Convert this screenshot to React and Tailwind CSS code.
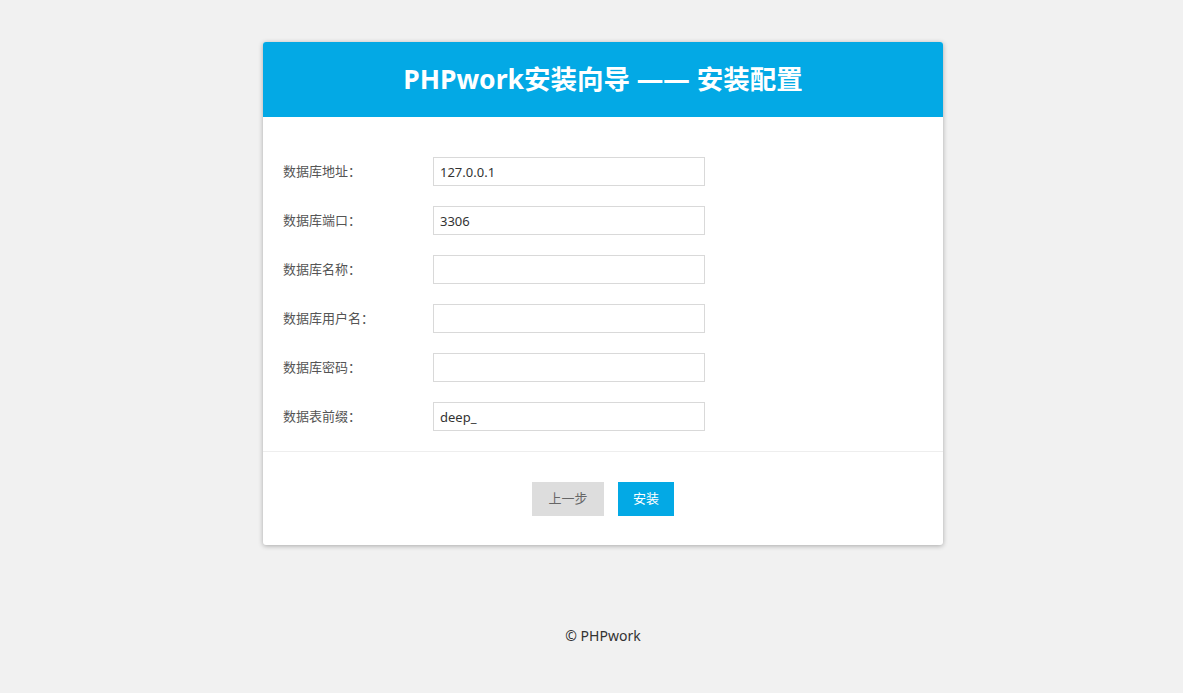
import React from 'react';

const fields = [
    { label: '数据库地址：', value: '127.0.0.1' },
    { label: '数据库端口：', value: '3306' },
    { label: '数据库名称：', value: '' },
    { label: '数据库用户名：', value: '' },
    { label: '数据库密码：', value: '', type: 'password' },
    { label: '数据表前缀：', value: 'deep_' },
];

const Field = ({ label, value, type }) => (
    <div className="flex items-center">
        <label className="w-[150px] text-[13px] text-[#555]">{label}</label>
        <input
            type={type || 'text'}
            defaultValue={value}
            className="w-[272px] h-[29px] border border-[#d9d9d9] bg-white px-[6px] text-[13px] text-[#333] outline-none"
        />
    </div>
);

const App = () => {
    return (
        <div
            className="min-h-screen bg-[#f1f1f1] pl-[23px] pt-[42px] flex flex-col items-center"
            style={{ fontFamily: '"Noto Sans", "Noto Sans CJK SC", sans-serif' }}
        >
            <div className="w-[680px] bg-white rounded-[3px] shadow-[0_1px_5px_rgba(0,0,0,0.3)] overflow-hidden">
                {/* Header */}
                <div className="h-[75px] bg-[#03a9e5] flex items-center justify-center">
                    <h1 className="text-[26.5px] font-bold text-white leading-none">PHPwork安装向导 —— 安装配置</h1>
                </div>

                {/* Form */}
                <div className="pt-10 pb-5 px-5 flex flex-col gap-5 border-b border-[#eee]">
                    {fields.map((f) => (
                        <Field key={f.label} {...f} />
                    ))}
                </div>

                {/* Buttons */}
                <div className="pt-[30px] pb-[29px] flex justify-center gap-[14px]">
                    <button className="w-[72px] h-[34px] bg-[#ddd] text-[#666] text-[13px]">上一步</button>
                    <button className="w-[56px] h-[34px] bg-[#03a9e5] text-white text-[13px]">安装</button>
                </div>
            </div>

            <div className="mt-[80px] text-[14px] text-[#333]">© PHPwork</div>
        </div>
    );
};

export default App;
